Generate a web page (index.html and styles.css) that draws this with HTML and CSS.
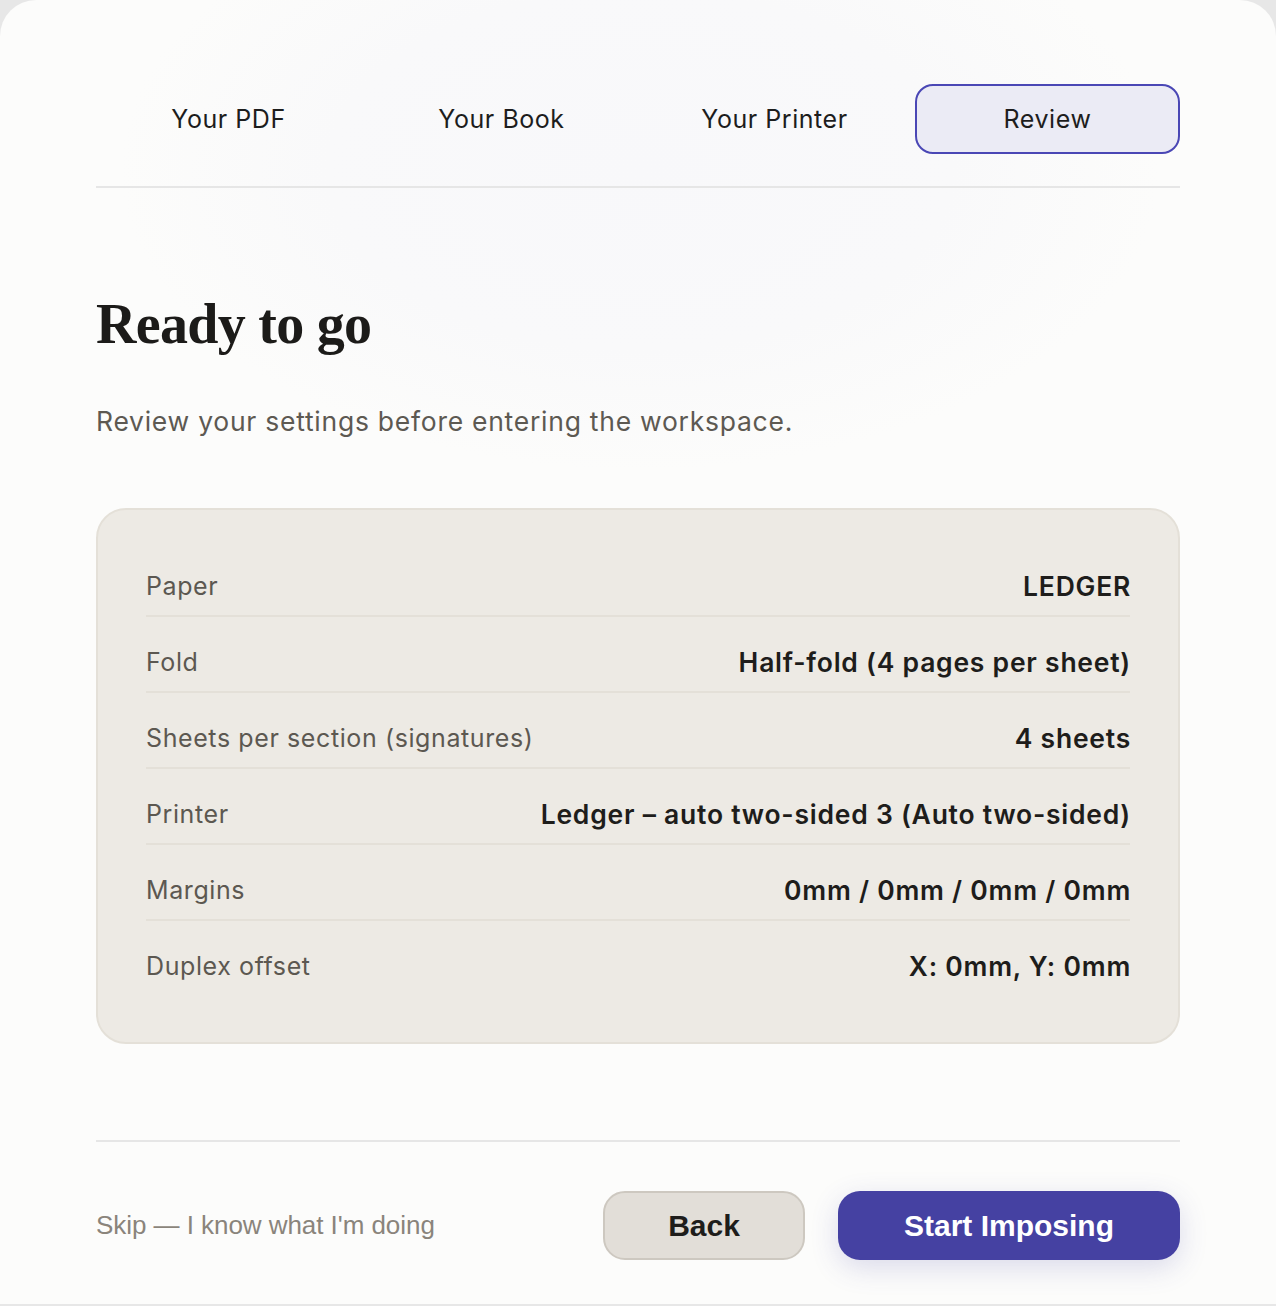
FILE: index.html
```html
<!DOCTYPE html>
<html lang="en">
<head>
<meta charset="utf-8">
<title>Review</title>
<link rel="stylesheet" href="styles.css">
</head>
<body>
<div class="card">
  <nav class="steps">
    <div class="step">Your PDF</div>
    <div class="step">Your Book</div>
    <div class="step">Your Printer</div>
    <div class="step active">Review</div>
  </nav>

  <h1 class="title">Ready to go</h1>
  <p class="subtitle">Review your settings before entering the workspace.</p>

  <div class="summary">
    <div class="row"><span class="label">Paper</span><span class="value">LEDGER</span></div>
    <div class="row"><span class="label">Fold</span><span class="value">Half-fold (4 pages per sheet)</span></div>
    <div class="row"><span class="label">Sheets per section (signatures)</span><span class="value">4 sheets</span></div>
    <div class="row"><span class="label">Printer</span><span class="value">Ledger – auto two-sided 3 (Auto two-sided)</span></div>
    <div class="row"><span class="label">Margins</span><span class="value">0mm / 0mm / 0mm / 0mm</span></div>
    <div class="row"><span class="label">Duplex offset</span><span class="value">X: 0mm, Y: 0mm</span></div>
  </div>

  <footer class="footer">
    <a class="skip">Skip — I know what I'm doing</a>
    <div class="actions">
      <button class="btn btn-back">Back</button>
      <button class="btn btn-start">Start Imposing</button>
    </div>
  </footer>
</div>
</body>
</html>
```

FILE: styles.css
```css
* { box-sizing: border-box; }

html, body {
  margin: 0;
  padding: 0;
  background: #e7e7e7;
}

body {
  font-family: Inter, "Noto Sans", sans-serif;
  height: 1306px;
  overflow: hidden;
}

.card {
  background:
    radial-gradient(ellipse 520px 300px at 640px 170px, #f8f8fa 0%, #f9f9fa 60%, rgba(252,252,251,0) 100%),
    #fcfcfb;
  border-radius: 36px 36px 0 0;
  padding: 84px 96px 44px;
  height: 1304px;
}

.steps {
  display: grid;
  grid-template-columns: repeat(4, 1fr);
  column-gap: 8px;
  padding-bottom: 32px;
  border-bottom: 2px solid #e6e6e6;
}

.step {
  height: 70px;
  display: flex;
  align-items: center;
  justify-content: center;
  font-size: 25px;
  letter-spacing: 0.55px;
  color: #1d1d1d;
  border: 2px solid transparent;
  border-radius: 18px;
}

.step.active {
  background: #ebebf5;
  border-color: #4a47b5;
}

.title {
  font-family: "Liberation Serif", "Times New Roman", serif;
  font-weight: 700;
  font-size: 56px;
  line-height: 62px;
  letter-spacing: -0.7px;
  color: #1c1b19;
  margin: 105px 0 0;
}

.subtitle {
  font-size: 26.5px;
  line-height: 39px;
  letter-spacing: 0.74px;
  color: #5d5952;
  margin: 47px 0 0;
}

.summary {
  margin-top: 67px;
  background: #edeae4;
  border: 2px solid #e4e0d8;
  border-radius: 30px;
  padding: 31px 48px 47px;
}

.row {
  display: flex;
  justify-content: space-between;
  align-items: center;
  padding: 27px 0 11px 0;
  line-height: 36px;
  border-bottom: 2px solid #e4e0d8;
}

.row:last-child { border-bottom: none; }

.label {
  font-size: 25px;
  letter-spacing: 0.6px;
  color: #5c5851;
}

.value {
  font-size: 26.5px;
  font-weight: 600;
  letter-spacing: 0.76px;
  color: #1e1d1b;
  margin-right: -1px;
}

.footer {
  margin-top: 96px;
  border-top: 2px solid #e6e6e6;
  padding-top: 49px;
  display: flex;
  justify-content: space-between;
  align-items: center;
}

.skip {
  font-family: "Liberation Sans", Arial, sans-serif;
  font-size: 26px;
  color: #8a847b;
  letter-spacing: -0.05px;
}

.actions {
  display: flex;
  gap: 33px;
  align-items: center;
}

.btn {
  font-family: "Liberation Sans", Arial, sans-serif;
  font-weight: 700;
  font-size: 30px;
  height: 69px;
  border-radius: 22px;
  cursor: pointer;
}

.btn-back {
  width: 202px;
  background: #e2ded8;
  border: 2px solid #cdc8c0;
  color: #1e1d1b;
}

.btn-start {
  width: 342px;
  background: #4541a2;
  border: none;
  color: #ffffff;
  box-shadow: 0 8px 28px rgba(69, 65, 162, 0.18);
}
```
